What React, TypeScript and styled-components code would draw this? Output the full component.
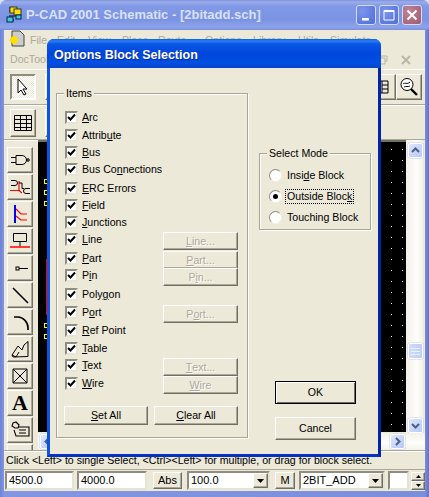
import React from "react";
import styled, { createGlobalStyle, css } from "styled-components";

const Global = createGlobalStyle`
  html, body { margin: 0; padding: 0; background: #d8dff4; }
  * { box-sizing: border-box; }
`;

const UI = `"Liberation Sans", "Noto Sans", sans-serif`;
const TITLE = `"Liberation Sans", "DejaVu Sans", sans-serif`;

const Window = styled.div`
  position: relative;
  width: 429px;
  height: 497px;
  display: flex;
  flex-direction: column;
  overflow: hidden;
  border-radius: 7px 7px 0 0;
  background: linear-gradient(90deg, #6d81d6 0, #8296e2 4px, #7a8edc 425px, #5f73cc 429px);
  font: 10.6px/13px ${UI};
  color: #000;
`;
const TitleBar = styled.div`
  height: 30px;
  flex: none;
  display: flex;
  align-items: center;
  padding: 0 7px 0 6px;
  background: linear-gradient(180deg, #7f93dd 0, #9aaceb 2px, #8299e6 6px, #7b93e3 20px, #8da3ea 27px, #7c8fdb 30px);
`;
const TitleText = styled.span`
  margin-left: 4px;
  flex: 1;
  font: bold 13px/14px ${TITLE};
  color: #d9e1f8;
  white-space: nowrap;
`;
const CaptionButton = styled.div<{ $close?: boolean }>`
  width: 20px;
  height: 20px;
  margin-left: 3px;
  border-radius: 3px;
  border: 1px solid #d5dcf5;
  display: flex;
  align-items: center;
  justify-content: center;
  background: ${(p) =>
    p.$close
      ? "radial-gradient(circle at 30% 30%, #bd8496, #a3596f)"
      : "radial-gradient(circle at 30% 30%, #7c96ea, #4f6cdb)"};
`;
const Content = styled.div`
  flex: 1;
  margin: 0 4px 6px;
  background: #ece9d8;
  display: flex;
  flex-direction: column;
  min-height: 0;
`;
const MenuBar = styled.div`
  height: 20px;
  flex: none;
  display: flex;
  align-items: center;
  padding-left: 4px;
  color: #aca899;
`;
const MenuItem = styled.span<{ $w: number }>`
  width: ${(p) => p.$w}px;
  flex: none;
`;
const DocBar = styled.div`
  height: 20px;
  flex: none;
  display: flex;
  align-items: center;
  padding: 0 6px;
  color: #aca899;
  border-bottom: 1px solid #fff;
`;
const MdiIcons = styled.div`
  margin-left: auto;
  display: flex;
  gap: 13px;
  padding-right: 8px;
  opacity: 0.55;
`;
const ToolRow = styled.div<{ $h: number }>`
  height: ${(p) => p.$h}px;
  flex: none;
  display: flex;
  padding: 4px 3px 0 6px;
  gap: 9px;
  border-bottom: 1px solid #aca899;
  box-shadow: 0 1px 0 #fff;
`;
const raised = css`
  background: #ece9d8;
  border: 1px solid;
  border-color: #fff #716f64 #716f64 #fff;
  box-shadow: inset -1px -1px 0 #aca899;
`;
const BarButton = styled.div<{ $h?: number; $pushed?: boolean; $right?: boolean; $flush?: boolean }>`
  ${raised}
  width: 26px;
  height: ${(p) => p.$h ?? 26}px;
  flex: none;
  display: flex;
  align-items: center;
  justify-content: center;
  ${(p) => p.$right && "margin-left: auto;"}
  ${(p) => p.$flush && "margin-left: -9px;"}
  ${(p) =>
    p.$pushed &&
    css`
      border-width: 2px;
      border-color: #8f8d80 #fff #fff #8f8d80;
      box-shadow: none;
      background: conic-gradient(#fff 0 25%, #ece9d8 0 50%, #fff 0 75%, #ece9d8 0) 0 0 / 2px 2px;
    `}
`;
const Workspace = styled.div`
  flex: 1;
  display: flex;
  min-height: 0;
  border-bottom: 1px solid #aca899;
`;
const LeftTools = styled.div`
  width: 34px;
  flex: none;
  padding: 7px 0 0 3px;
  display: flex;
  flex-direction: column;
  gap: 1px;
  overflow: hidden;
`;
const ViewColumn = styled.div`
  flex: 1;
  display: flex;
  flex-direction: column;
  min-width: 0;
`;
const ViewRow = styled.div`
  flex: 1;
  display: flex;
  min-height: 0;
`;
const dots = css`
  background-color: #000;
  background-image: conic-gradient(at 1px 1px, #000 0 75%, #fff 0);
  background-size: 11px 11px;
`;
const Canvas = styled.div`
  position: relative;
  flex: 1;
  margin-bottom: 1px;
  ${dots}
  background-position: 1px 7px;
  border-top: 2px solid #716f64;
  overflow: hidden;
`;
const DotStrip = styled.div`
  position: absolute;
  left: 0;
  top: 0;
  bottom: 0;
  width: 10px;
  ${dots}
  background-position: 9px 4px;
`;
const Junction = styled.div<{ $y: number }>`
  position: absolute;
  left: 6px;
  top: ${(p) => p.$y}px;
  width: 5px;
  height: 5px;
  border: 1px solid #ffff00;
`;
const RedWire = styled.div`
  position: absolute;
  left: 8px;
  top: 117px;
  width: 2px;
  height: 56px;
  background: #ff0000;
`;
const VScroll = styled.div`
  width: 19px;
  flex: none;
  padding: 3px 2px 0 1px;
  display: flex;
  flex-direction: column;
  align-items: center;
  background: linear-gradient(90deg, #f3f1e8, #fdfdfa 60%, #f3f1e8 88%, #ece9d8 89%);
`;
const ScrollButton = styled.div<{ $w?: number; $h?: number }>`
  width: ${(p) => p.$w ?? 15}px;
  height: ${(p) => p.$h ?? 15}px;
  flex: none;
  border: 1px solid #fff;
  border-radius: 2px;
  background: linear-gradient(135deg, #dfe7fd, #b6c8f7);
  box-shadow: 0 0 0 0.5px #c5cfee;
  display: flex;
  align-items: center;
  justify-content: center;
`;
const Thumb = styled(ScrollButton)`
  margin-top: 185px;
  height: 16px;
  background: linear-gradient(90deg, #cfdcfb, #bccdf8);
`;
const DownButton = styled(ScrollButton)`
  margin-top: 59px;
`;
const HScroll = styled.div`
  height: 17px;
  flex: none;
  display: flex;
  align-items: center;
  padding: 0 20px 0 2px;
  justify-content: space-between;
  background: linear-gradient(180deg, #f3f1e8, #fdfdfa 60%, #f3f1e8);
`;
const StatusBar = styled.div`
  height: 19px;
  flex: none;
  display: flex;
  align-items: center;
  padding-left: 2px;
  white-space: nowrap;
  overflow: hidden;
  border-top: 1px solid #fff;
  border-bottom: 1px solid #aca899;
`;
const BottomBar = styled.div`
  height: 21px;
  flex: none;
  display: flex;
  align-items: center;
  padding-left: 1px;
`;
const sunken = css`
  background: #fff;
  border: 2px solid;
  border-color: #8f8d80 #e6e3d3 #e6e3d3 #8f8d80;
`;
const Field = styled.div<{ $w: number; $gap?: number }>`
  ${sunken}
  width: ${(p) => p.$w}px;
  height: 19px;
  margin-left: ${(p) => p.$gap ?? 0}px;
  flex: none;
  display: flex;
  align-items: center;
  padding-left: 2px;
  font-size: 11px;
  position: relative;
`;
const ComboArrow = styled.div`
  ${raised}
  width: 15px;
  height: 15px;
  margin-left: auto;
  display: flex;
  align-items: center;
  justify-content: center;
`;
const FlatButton = styled.div<{ $w: number; $gap: number }>`
  ${raised}
  width: ${(p) => p.$w}px;
  margin-left: ${(p) => p.$gap}px;
  height: 17px;
  flex: none;
  display: flex;
  align-items: center;
  justify-content: center;
  font-size: 11px;
`;
const Spinner = styled.div`
  width: 14px;
  margin-left: 2px;
  flex: none;
  display: flex;
  flex-direction: column;
`;
const SpinPart = styled.div`
  ${raised}
  height: 9px;
  display: flex;
  align-items: center;
  justify-content: center;
`;

/* dialog */
const Dialog = styled.div`
  position: absolute;
  left: 47px;
  top: 39px;
  width: 334px;
  height: 418px;
  display: flex;
  flex-direction: column;
  border-radius: 7px 7px 0 0;
  background: #0a4fe0;
  border-right: 3px solid #0225a8;
  border-left: 3px solid #0a55e6;
  border-bottom: 3px solid #0531c4;
`;
const DialogTitle = styled.div`
  height: 29px;
  flex: none;
  margin: 0 -3px;
  padding: 3px 0 0 7px;
  display: flex;
  align-items: center;
  border-radius: 7px 7px 0 0;
  background: linear-gradient(180deg, #0a5fe8 0, #2c7df5 2px, #0a58e6 5px, #0046dc 14px, #0050e2 24px, #0a43c8 29px);
  font: bold 12.5px/14px ${TITLE};
  color: #fff;
  text-shadow: 1px 1px 0 #0a2a9a;
`;
const Client = styled.div`
  flex: 1;
  display: flex;
  background: #ece9d8;
  padding: 25px 0 0 6px;
`;
const Group = styled.div<{ $w: number; $h: number }>`
  position: relative;
  width: ${(p) => p.$w}px;
  height: ${(p) => p.$h}px;
  flex: none;
  border: 1px solid #a8a594;
  box-shadow: 1px 1px 0 #fff, inset 1px 1px 0 #fff;
`;
const GroupLabel = styled.span`
  position: absolute;
  left: 7px;
  top: -7px;
  padding: 0 2px;
  background: #ece9d8;
`;
const ItemList = styled.div`
  padding: 17px 0 0 8px;
  display: flex;
  flex-direction: column;
`;
const ItemRow = styled.div<{ $h: number }>`
  height: ${(p) => p.$h}px;
  display: flex;
  align-items: flex-start;
`;
const CheckBox = styled.div`
  width: 13px;
  height: 13px;
  flex: none;
  background: #fff;
  border: 2px solid;
  border-color: #8f8d80 #e8e5d6 #e8e5d6 #8f8d80;
  display: flex;
  align-items: center;
  justify-content: center;
`;
const ItemLabel = styled.span`
  margin-left: 4px;
  white-space: nowrap;
`;
const SideButton = styled.div`
  ${raised}
  position: absolute;
  left: 106px;
  margin-top: -1px;
  width: 75px;
  height: 18px;
  display: flex;
  align-items: center;
  justify-content: center;
  color: #aca899;
  text-shadow: 1px 1px 0 #fff;
`;
const GroupActions = styled.div`
  display: flex;
  gap: 6px;
  padding-left: 7px;
  margin-top: 12px;
`;
const PushButton = styled.div<{ $w: number; $h: number; $default?: boolean }>`
  ${raised}
  width: ${(p) => p.$w}px;
  height: ${(p) => p.$h}px;
  display: flex;
  align-items: center;
  justify-content: center;
  ${(p) =>
    p.$default &&
    css`
      border-color: #000;
      box-shadow: inset 1px 1px 0 #fff, inset -1px -1px 0 #716f64;
    `}
`;
const RightColumn = styled.div`
  margin-left: 11px;
  display: flex;
  flex-direction: column;
  padding-top: 60px;
`;
const RadioList = styled.div`
  padding: 15px 0 0 9px;
  display: flex;
  flex-direction: column;
  gap: 8px;
`;
const RadioRow = styled.div`
  height: 13px;
  display: flex;
  align-items: center;
`;
const Radio = styled.div`
  width: 13px;
  height: 13px;
  flex: none;
  border-radius: 50%;
  background: #fff;
  border: 1.5px solid;
  border-color: #8f8d80 #f2f0e6 #f2f0e6 #8f8d80;
  display: flex;
  align-items: center;
  justify-content: center;
`;
const RadioDot = styled.div`
  width: 5px;
  height: 5px;
  border-radius: 50%;
  background: #000;
`;
const RadioLabel = styled.span<{ $focus?: boolean }>`
  white-space: nowrap;
  border: 1px ${(p) => (p.$focus ? "dotted #000" : "solid transparent")};
  padding: 0 1px;
  margin-left: 3px;
`;
const DialogActions = styled.div`
  display: flex;
  flex-direction: column;
  gap: 13px;
  margin: 151px 0 0 16px;
`;

const Chevron = ({ d }: { d: string }) => (
  <svg width="9" height="9" viewBox="0 0 9 9" fill="none" stroke="#4d6185" strokeWidth="2">
    <path d={d} />
  </svg>
);
const Arrow = () => (
  <svg width="7" height="4" viewBox="0 0 7 4"><path d="M0 0h7L3.5 4z" fill="#000" /></svg>
);
const Check = () => (
  <svg width="9" height="9" viewBox="0 0 9 9" fill="none" stroke="#000" strokeWidth="2">
    <path d="M1 4l2.5 2.5L8 1.5" />
  </svg>
);
const I = ({ children }: { children: React.ReactNode }) => (
  <svg width="24" height="22" viewBox="0 0 24 22" fill="none" stroke="#000" strokeWidth="1">
    {children}
  </svg>
);

const toolIcons: React.ReactNode[] = [
  <I><path d="M3 8.5h5M3 13.5h5M8 6.5h6a4.5 4.5 0 0 1 0 9H8zM18.5 11h2" /><circle cx="20" cy="11" r="1.3" /></I>,
  <I>
    <path d="M3 4.5h4a2.5 2.5 0 0 1 0 5H3M22 12.5h-4a2.5 2.5 0 0 0 0 5h4" />
    <path d="M2 14.5h10M11 5v9.5l3 2.5" stroke="#f00" strokeWidth="1.2" />
    <path d="M11 7h3v5.5h2" stroke="#000" />
  </I>,
  <I>
    <path d="M7 2v18" stroke="#00f" strokeWidth="2" />
    <path d="M8 6l5 5h6M8 13l5 4h6" stroke="#f00" strokeWidth="1.2" />
  </I>,
  <I>
    <path d="M5.5 3.5h13v8h-13zM12 11.5v5" />
    <path d="M2 17h20" stroke="#f00" strokeWidth="1.3" />
  </I>,
  <I>
    <path d="M11 11.5h9" />
    <rect x="8" y="10" width="3" height="3" />
  </I>,
  <I><path d="M5 4l15 15" strokeWidth="1.6" /></I>,
  <I><path d="M6 6h4c5 0 10 5 10 11v2" strokeWidth="1.7" /></I>,
  <I><path d="M20 3.5v15L5 19 4 17 10 8l4 4 2-5z" /><path d="M4 17l4 2 3-5" /></I>,
  <I><path d="M5 4h14v14H5zM5 4l14 14M19 4L5 18" /></I>,
  null,
  <I>
    <path d="M5 4l3-1 3 3-1 3H7L4 7zM10 8h11v9H8l-2-6" strokeWidth="1.1" />
    <path d="M11 11h7M11 14h7" />
  </I>,
];

const BigA = styled.span`
  font: bold 22px/22px "Liberation Serif", serif;
`;

const menu: [string, number][] = [
  ["File", 27], ["Edit", 31], ["View", 34], ["Place", 36], ["Route", 47],
  ["Options", 48], ["Library", 45], ["Utils", 32], ["Simulate", 60],
];

const U = ({ s, i }: { s: string; i: number }) => (
  <>
    {s.slice(0, i)}
    <u>{s[i]}</u>
    {s.slice(i + 1)}
  </>
);

type Item = { name: string; u: number; h: number; btn?: string; bu?: number };
const items: Item[] = [
  { name: "Arc", u: 0, h: 18 },
  { name: "Attribute", u: 6, h: 17 },
  { name: "Bus", u: 0, h: 17 },
  { name: "Bus Connections", u: 6, h: 19 },
  { name: "ERC Errors", u: 0, h: 17 },
  { name: "Field", u: 0, h: 17 },
  { name: "Junctions", u: 0, h: 17 },
  { name: "Line", u: 0, h: 19, btn: "Line...", bu: 0 },
  { name: "Part", u: 0, h: 17, btn: "Part...", bu: 0 },
  { name: "Pin", u: 1, h: 19, btn: "Pin...", bu: 1 },
  { name: "Polygon", u: 4, h: 18 },
  { name: "Port", u: 1, h: 18, btn: "Port...", bu: 1 },
  { name: "Ref Point", u: 0, h: 18 },
  { name: "Table", u: 0, h: 17 },
  { name: "Text", u: 0, h: 18, btn: "Text...", bu: 0 },
  { name: "Wire", u: 0, h: 17, btn: "Wire", bu: 0 },
];

export default function App() {
  return (
    <Window>
      <Global />
      <TitleBar>
        <svg width="16" height="18" viewBox="0 0 16 18">
          <path d="M3 2h5M3 5h10M3 10h10M3 14h5" stroke="#000" />
          <rect x="4" y="1" width="7" height="6" fill="#ffe000" stroke="#333" />
          <rect x="8" y="3" width="7" height="6" fill="#ffe000" stroke="#333" />
          <rect x="1" y="11" width="6" height="5" fill="#38c8e8" stroke="#124" />
          <rect x="10" y="9" width="5" height="4" fill="#38c8e8" stroke="#124" />
        </svg>
        <TitleText>P-CAD 2001 Schematic - [2bitadd.sch]</TitleText>
        <CaptionButton>
          <svg width="12" height="12" viewBox="0 0 12 12"><path d="M2 9h7v2.5H2z" fill="#fff" /></svg>
        </CaptionButton>
        <CaptionButton>
          <svg width="12" height="12" viewBox="0 0 12 12" fill="none" stroke="#fff"><path d="M1 1.5h10v9.5H1zM1 2.5h10" /></svg>
        </CaptionButton>
        <CaptionButton $close>
          <svg width="12" height="12" viewBox="0 0 12 12" fill="none" stroke="#fff" strokeWidth="2"><path d="M1.5 1.5l9 9M10.5 1.5l-9 9" /></svg>
        </CaptionButton>
      </TitleBar>
      <Content>
        <MenuBar>
          <MenuItem $w={22}>
            <svg width="17" height="17" viewBox="0 0 17 17">
              <path d="M4 1h8l4 4v11H4z" fill="#ccc" stroke="#444" />
              <path d="M6 5l5 5-5 5-5-5z" fill="#ffe000" />
            </svg>
          </MenuItem>
          {menu.map(([m, w]) => (
            <MenuItem key={m} $w={w}>{m}</MenuItem>
          ))}
        </MenuBar>
        <DocBar>
          DocTool
          <MdiIcons>
            <svg width="10" height="10" viewBox="0 0 10 10" fill="none" stroke="#8f8d80"><path d="M3 3V1h6v5H7M1 3h6v6H1z" /></svg>
            <svg width="10" height="10" viewBox="0 0 10 10" fill="none" stroke="#8f8d80" strokeWidth="2"><path d="M1 1l8 8M9 1l-8 8" /></svg>
          </MdiIcons>
        </DocBar>
        <ToolRow $h={35}>
          <BarButton $pushed>
            <svg width="14" height="18" viewBox="0 0 14 18"><path d="M2 1v14l3-3 3 5 2-1-3-5h4z" fill="#fff" stroke="#000" /></svg>
          </BarButton>
          <BarButton />
          <BarButton $right>
            <svg width="12" height="14" viewBox="0 0 12 14" fill="none" stroke="#000"><path d="M1 1h10v12H1zM5 1v12M5 5h6M5 9h6" /></svg>
          </BarButton>
          <BarButton $flush>
            <svg width="20" height="20" viewBox="0 0 20 20" fill="none" stroke="#000">
              <circle cx="8" cy="7.5" r="6" fill="#fff" />
              <path d="M4 7c2-2 4 1 7-2M5 10c2-1 4 0 6-1" />
              <path d="M12 12l6 6" strokeWidth="2.4" />
            </svg>
          </BarButton>
        </ToolRow>
        <ToolRow $h={35}>
          <BarButton $h={28}>
            <svg width="20" height="18" viewBox="0 0 20 18" fill="none" stroke="#000"><path d="M1.5 1.5h17v15h-17zM1.5 5.5h17M1.5 9.5h17M1.5 13.5h17M7.5 1.5v15M13.5 1.5v15" /></svg>
          </BarButton>
          <BarButton $h={28} />
        </ToolRow>
        <Workspace>
          <LeftTools>
            {toolIcons.map((ic, i) => (
              <BarButton key={i}>{ic ?? <BigA>A</BigA>}</BarButton>
            ))}
            <BarButton />
          </LeftTools>
          <ViewColumn>
            <ViewRow>
              <Canvas>
                <DotStrip />
                <RedWire />
                {[37, 48, 59, 181, 192].map((y) => (
                  <Junction key={y} $y={y} />
                ))}
              </Canvas>
              <VScroll>
                <ScrollButton><Chevron d="M1 6l3.5-3.5L8 6" /></ScrollButton>
                <Thumb>
                  <svg width="9" height="9" viewBox="0 0 9 9" stroke="#eef3ff"><path d="M0 1.5h9M0 4.5h9M0 7.5h9" /></svg>
                </Thumb>
                <DownButton><Chevron d="M1 3l3.5 3.5L8 3" /></DownButton>
              </VScroll>
            </ViewRow>
            <HScroll>
              <ScrollButton><Chevron d="M6 1L2.5 4.5 6 8" /></ScrollButton>
              <ScrollButton><Chevron d="M3 1l3.5 3.5L3 8" /></ScrollButton>
            </HScroll>
          </ViewColumn>
        </Workspace>
        <StatusBar>Click &lt;Left&gt; to single Select, &lt;Ctrl&gt;&lt;Left&gt; for multiple, or drag for block select.</StatusBar>
        <BottomBar>
          <Field $w={69}>4500.0</Field>
          <Field $w={70} $gap={3}>4000.0</Field>
          <FlatButton $w={29} $gap={6}>Abs</FlatButton>
          <Field $w={83} $gap={5}>100.0<ComboArrow><Arrow /></ComboArrow></Field>
          <FlatButton $w={20} $gap={5}>M</FlatButton>
          <Field $w={86} $gap={4}>2BIT_ADD<ComboArrow><Arrow /></ComboArrow></Field>
          <Field $w={21} $gap={3} />
          <Spinner>
            <SpinPart><svg width="5" height="3" viewBox="0 0 5 3"><path d="M0 3h5L2.5 0z" /></svg></SpinPart>
            <SpinPart><svg width="5" height="3" viewBox="0 0 5 3"><path d="M0 0h5L2.5 3z" /></svg></SpinPart>
          </Spinner>
        </BottomBar>
      </Content>

      <Dialog>
        <DialogTitle>Options Block Selection</DialogTitle>
        <Client>
          <Group $w={192} $h={345}>
            <GroupLabel>Items</GroupLabel>
            <ItemList>
              {items.map((it) => (
                <ItemRow key={it.name} $h={it.h}>
                  <CheckBox><Check /></CheckBox>
                  <ItemLabel><U s={it.name} i={it.u} /></ItemLabel>
                  {it.btn && <SideButton><U s={it.btn} i={it.bu ?? 0} /></SideButton>}
                </ItemRow>
              ))}
            </ItemList>
            <GroupActions>
              <PushButton $w={84} $h={19}><U s="Set All" i={0} /></PushButton>
              <PushButton $w={84} $h={19}><U s="Clear All" i={0} /></PushButton>
            </GroupActions>
          </Group>
          <RightColumn>
            <Group $w={112} $h={77}>
              <GroupLabel>Select Mode</GroupLabel>
              <RadioList>
                <RadioRow><Radio /><RadioLabel><U s="Inside Block" i={4} /></RadioLabel></RadioRow>
                <RadioRow><Radio><RadioDot /></Radio><RadioLabel $focus><U s="Outside Block" i={12} /></RadioLabel></RadioRow>
                <RadioRow><Radio /><RadioLabel>Touching Block</RadioLabel></RadioRow>
              </RadioList>
            </Group>
            <DialogActions>
              <PushButton $w={81} $h={23} $default>OK</PushButton>
              <PushButton $w={81} $h={23}>Cancel</PushButton>
            </DialogActions>
          </RightColumn>
        </Client>
      </Dialog>
    </Window>
  );
}
